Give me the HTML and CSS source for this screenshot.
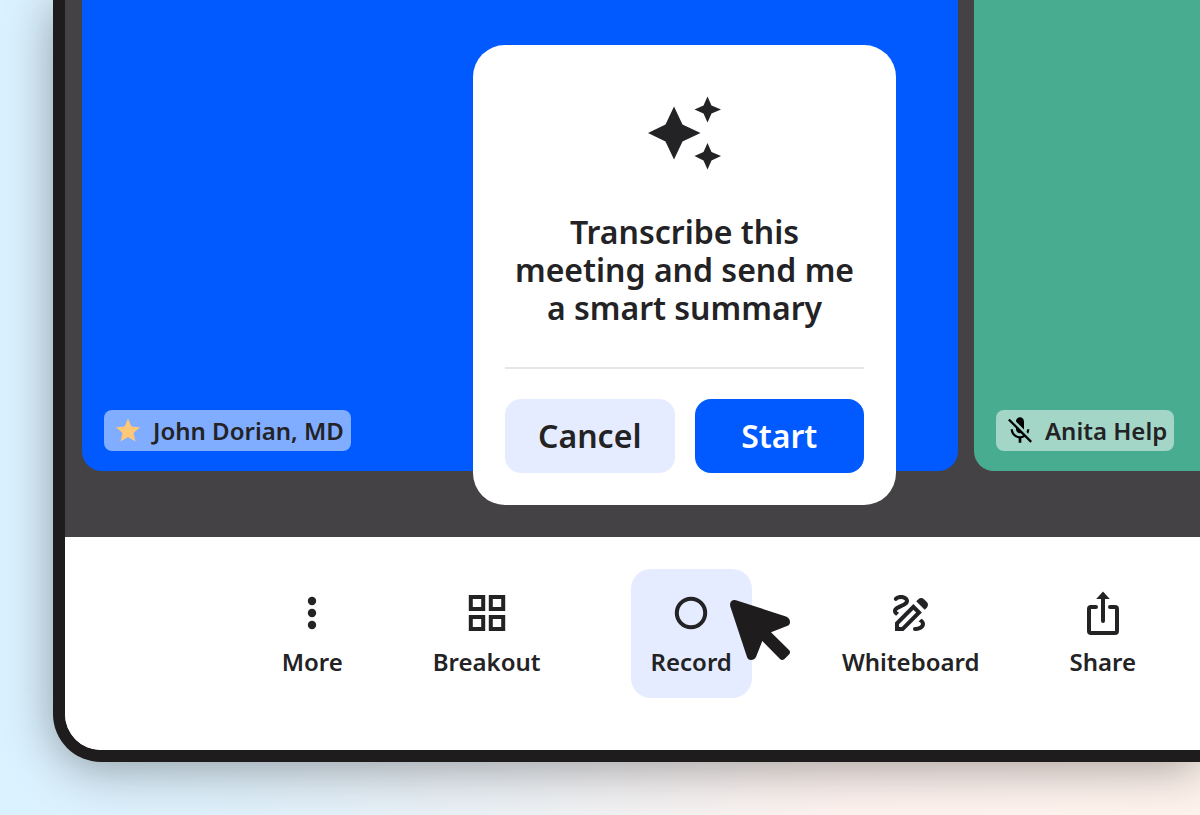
FILE: index.html
```
<!DOCTYPE html>
<html lang="en">
  <head>
    <meta charset="UTF-8" />
    <meta name="viewport" content="width=device-width, initial-scale=1.0" />
    <title>Meeting</title>
    <link rel="stylesheet" href="styles.css">
  </head>
  <body>
    <div class="device">
      <main class="stage">
        <div class="tile tile-blue">
          <div class="name-tag">
            <svg class="tag-icon star" viewBox="2 2 20 19" aria-hidden="true">
              <path d="M12 17.27 18.18 21l-1.64-7.03L22 9.24l-7.19-.61L12 2 9.19 8.63 2 9.24l5.46 4.73L5.82 21z" />
            </svg>
            <span>John Dorian, MD</span>
          </div>
        </div>
        <div class="tile tile-green">
          <div class="name-tag">
            <svg class="tag-icon" viewBox="3 2 18 19" aria-hidden="true">
              <path d="M19 11h-1.7c0 .74-.16 1.43-.43 2.05l1.23 1.23c.56-.98.9-2.09.9-3.28zm-4.02.17c0-.06.02-.11.02-.17V5c0-1.66-1.34-3-3-3S9 3.34 9 5v.18l5.98 5.99zM4.27 3L3 4.27l6.01 6.01V11c0 1.66 1.33 3 2.99 3 .22 0 .44-.03.65-.08l1.66 1.66c-.71.33-1.5.52-2.31.52-2.76 0-5.3-2.1-5.3-5.1H5c0 3.41 2.72 6.23 6 6.72V21h2v-3.28c.91-.13 1.77-.45 2.54-.9L19.73 21 21 19.73 4.27 3z" />
            </svg>
            <span>Anita Help</span>
          </div>
        </div>

        <div class="dialog" role="dialog" aria-labelledby="dialog-title">
          <svg class="sparkles" viewBox="0 0 73 74" aria-hidden="true">
            <path d="M26 10.5L34.5 28.5L52.5 37L34.5 45.5L26 63.5L17.5 45.5L0 37L17.5 28.5z" />
            <path d="M59.5 .5L63.5 9.5L73 13.5L63.5 17.5L59.5 26.5L55.5 17.5L46.5 13.5L55.5 9.5z" />
            <path d="M59.5 47L63.5 56L73 60L63.5 64.5L59.5 73.5L55.5 64.5L46.5 60L55.5 56z" />
          </svg>
          <h2 id="dialog-title">Transcribe this meeting and send me a smart summary</h2>
          <div class="dialog-buttons">
            <button type="button" class="btn">Cancel</button>
            <button type="button" class="btn btn-primary">Start</button>
          </div>
        </div>
      </main>

      <nav class="toolbar">
        <button type="button" class="tool">
          <svg viewBox="0 0 40 40" aria-hidden="true">
            <circle cx="20" cy="8" r="4.2" />
            <circle cx="20" cy="20" r="4.2" />
            <circle cx="20" cy="32" r="4.2" />
          </svg>
          <span>More</span>
        </button>
        <button type="button" class="tool">
          <svg class="outline" viewBox="0 0 40 40" aria-hidden="true">
            <path d="M3.8 4h12.4v12H3.8zM23.8 4h12.4v12H23.8zM3.8 24h12.4v12H3.8zM23.8 24h12.4v12H23.8z" />
          </svg>
          <span>Breakout</span>
        </button>
        <button type="button" class="tool tool-active">
          <svg class="outline" viewBox="0 0 40 40" aria-hidden="true">
            <circle cx="20" cy="20" r="14.2" />
          </svg>
          <span>Record</span>
          <svg class="cursor" viewBox="0 0 60 60" aria-hidden="true">
            <path d="M6 .3L56 16.5Q60 18.2 60 22Q60 25 57 26L41 32.3L59 50Q61 52 59 54.5L54.5 59Q52 61 50 59L32.3 41L26 57Q24.5 60 21 60Q18 60 17 57L.3 6.5Q-.5 3 1.5 1Q3.5-.5 6 .3z" />
          </svg>
        </button>
        <button type="button" class="tool">
          <svg viewBox="2 2 20 20" aria-hidden="true">
            <path d="M18.85 10.39l1.06-1.06c.78-.78.78-2.05 0-2.83L18.5 5.09c-.78-.78-2.05-.78-2.83 0l-1.06 1.06 4.24 4.24z" />
            <path fill-rule="evenodd" d="M13.19 7.56L4 16.76V21h4.24l9.19-9.19zM13.19 10.39L6 17.59V19h1.41l7.19-7.19z" />
            <path d="M19 17.5c0 2.19-2.54 3.5-5 3.5-.55 0-1-.45-1-1s.45-1 1-1c1.54 0 3-.73 3-1.5 0-.47-.48-.87-1.23-1.2l1.48-1.48c1.07.63 1.75 1.47 1.75 2.68zM4.58 13.35C3.61 12.79 3 12.06 3 11c0-1.8 1.89-2.63 3.56-3.36C7.59 7.18 9 6.56 9 6c0-.41-.78-1-2-1-1.26 0-1.8.61-1.83.64-.35.41-.98.46-1.4.12-.41-.34-.49-.95-.15-1.38C3.73 4.24 4.76 3 7 3s4 1.32 4 3c0 1.87-1.93 2.72-3.64 3.47C6.42 9.88 5 10.5 5 11c0 .31.43.6 1.07.86l-1.49 1.49z" />
          </svg>
          <span>Whiteboard</span>
        </button>
        <button type="button" class="tool">
          <svg class="outline" viewBox="0 0 40 40" aria-hidden="true">
            <path d="M13 14H8Q6 14 6 16V38Q6 40 8 40H32Q34 40 34 38V16Q34 14 32 14H27M20 4v24" />
            <path class="solid" d="M20-1.5L26.8 6H13.2z" />
          </svg>
          <span>Share</span>
        </button>
      </nav>
    </div>
  </body>
</html>
```
FILE: styles.css
```
* {
  box-sizing: border-box;
}
body {
  display: flex;
  flex-direction: column;
  min-height: 100vh;
  margin: 0;
  padding: 0 0 53px 53px;
  overflow: hidden;
  background: linear-gradient(90deg, #daf2ff 0%, #dff0fb 20%, #fdf2ee 70%, #fff4ed 100%);
  font-family: "Noto Sans", sans-serif;
  font-weight: 600;
  color: #232225;
}
button {
  border: none;
  font: inherit;
  color: inherit;
  cursor: pointer;
}
.device {
  flex: 1;
  display: flex;
  flex-direction: column;
  overflow: hidden;
  border: solid #1f1c1e;
  border-width: 0 0 12px 12px;
  border-bottom-left-radius: 48px;
  background: #fff;
  box-shadow: 0 6px 48px rgba(31, 28, 30, 0.4);
}
.stage {
  position: relative;
  flex: 1;
  display: grid;
  grid-template-columns: 31fr 8fr;
  gap: 16px;
  padding: 0 0 66px 17px;
  background: #454246;
}
.tile {
  display: flex;
  align-items: flex-end;
  padding: 20px 22px;
  border-radius: 0 0 20px 20px;
}
.tile-blue {
  background: #005aff;
}
.tile-green {
  border-bottom-right-radius: 0;
  background: #48ac90;
}
.name-tag {
  display: flex;
  align-items: center;
  gap: 13px;
  height: 41px;
  padding: 0 7px 0 12px;
  border-radius: 8px;
  background: rgba(255, 255, 255, 0.5);
  font-size: 24px;
  line-height: 32px;
  white-space: nowrap;
}
.tag-icon {
  width: 24px;
  height: 26px;
  margin-bottom: 2px;
}
.star {
  height: 24px;
  fill: #ffc876;
}

/* Smart summary dialog */
.dialog {
  position: absolute;
  right: 304px;
  bottom: 32px;
  display: flex;
  flex-direction: column;
  align-items: center;
  width: 423px;
  padding: 51px 32px 32px;
  border-radius: 32px;
  background: #fff;
}
.sparkles {
  width: 73px;
  height: 74px;
  fill: #232225;
}
.dialog h2 {
  margin: 43px 0 40px;
  font-size: 32px;
  line-height: 38px;
  font-weight: 600;
  text-align: center;
}
.dialog-buttons {
  display: flex;
  gap: 20px;
  width: 100%;
  padding-top: 30px;
  border-top: 2px solid #e6e6e6;
}
.btn {
  flex: 1;
  height: 74px;
  padding: 0 0 2px;
  border-radius: 16px;
  background: #e5ecff;
  font-size: 32px;
}
.btn-primary {
  background: #005aff;
  color: #fff;
}

/* Bottom toolbar */
.toolbar {
  display: flex;
  justify-content: flex-end;
  gap: 90px;
  padding: 32px 64px 52px;
  background: #fff;
}
.tool {
  display: flex;
  flex-direction: column;
  align-items: center;
  gap: 12px;
  padding: 24px 0 20px;
  background: none;
  font-size: 24px;
  line-height: 33px;
}
.tool svg {
  width: 40px;
  height: 40px;
  overflow: visible;
  fill: #232225;
}
.tool .outline {
  fill: none;
  stroke: #232225;
  stroke-width: 4;
  stroke-linecap: round;
}
.tool .solid {
  fill: #232225;
  stroke: none;
}
.tool-active {
  position: relative;
  padding-left: 20px;
  padding-right: 20px;
  border-radius: 20px;
  background: #e5ecff;
}
.tool .cursor {
  position: absolute;
  top: 31px;
  right: -38px;
  width: 60px;
  height: 60px;
  fill: #1f1c1e;
}
```
